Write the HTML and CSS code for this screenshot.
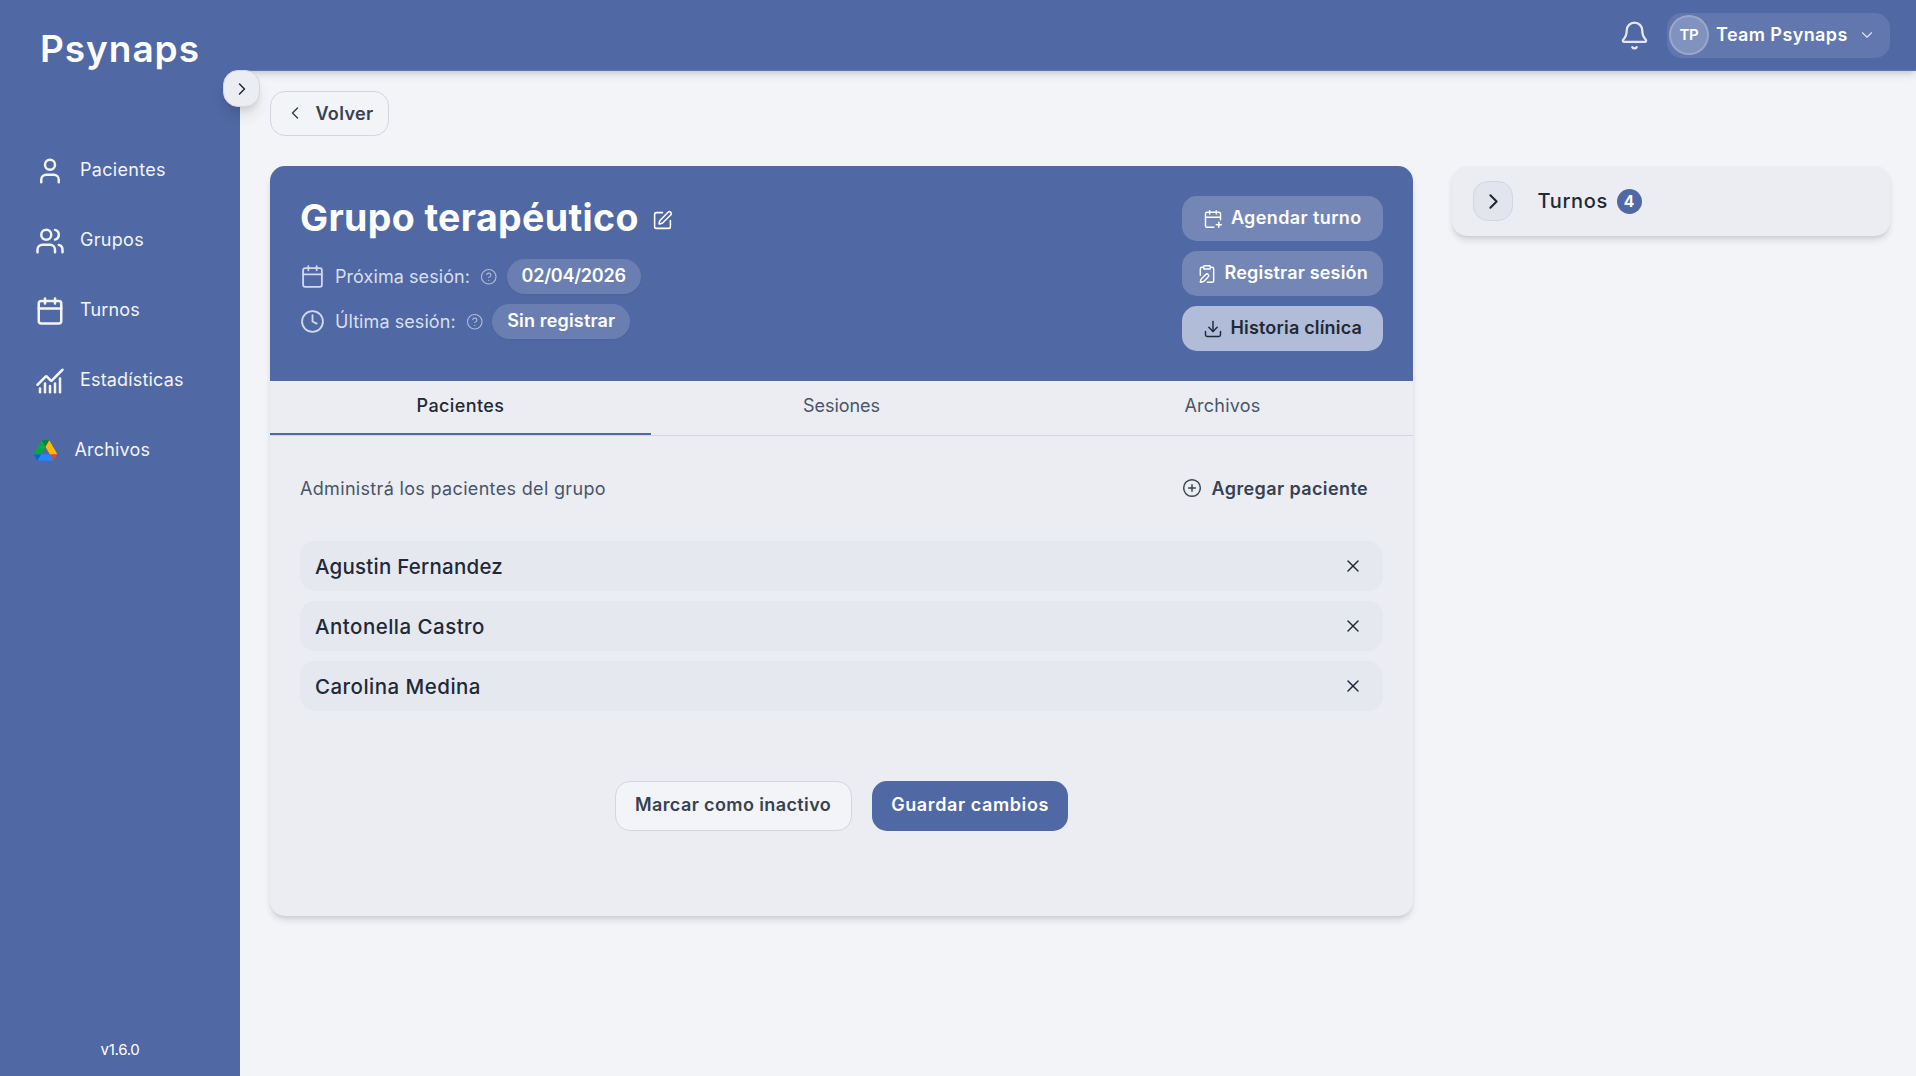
FILE: index.html
```
<!DOCTYPE html>
<html lang="es">
<head>
    <meta charset="UTF-8">
    <meta name="viewport" content="width=device-width, initial-scale=1.0">
    <title>Psynaps - Grupo terapéutico</title>
    <link rel="stylesheet" href="styles.css">
</head>
<body>
    <aside class="sidebar">
        <div class="logo">Psynaps</div>
        <nav class="nav">
            <a class="nav-item">
                <svg class="icon icon-nav" viewBox="0 0 24 24"><path d="M19 21v-2a4 4 0 0 0-4-4H9a4 4 0 0 0-4 4v2"/><circle cx="12" cy="7" r="4"/></svg>
                <span class="ls-wide">Pacientes</span>
            </a>
            <a class="nav-item">
                <svg class="icon icon-nav" viewBox="0 0 24 24"><path d="M16 21v-2a4 4 0 0 0-4-4H6a4 4 0 0 0-4 4v2"/><circle cx="9" cy="7" r="4"/><path d="M22 21v-2a4 4 0 0 0-3-3.87"/><path d="M16 3.13a4 4 0 0 1 0 7.75"/></svg>
                <span class="ls-wide">Grupos</span>
            </a>
            <a class="nav-item">
                <svg class="icon icon-nav" viewBox="0 0 24 24"><path d="M8 2v4"/><path d="M16 2v4"/><rect x="3" y="4" width="18" height="18" rx="2"/><path d="M3 10h18"/></svg>
                <span>Turnos</span>
            </a>
            <a class="nav-item">
                <svg class="icon icon-nav" viewBox="0 0 24 24"><path d="M12 16v5"/><path d="M16 14v7"/><path d="M20 10v11"/><path d="m22 3-8.646 8.646a.5.5 0 0 1-.708 0L9.354 8.354a.5.5 0 0 0-.707 0L2 15"/><path d="M4 18v3"/><path d="M8 14v7"/></svg>
                <span>Estadísticas</span>
            </a>
            <a class="nav-item nav-drive">
                <svg class="drive" viewBox="0 0 87.3 78">
                    <path fill="#0066da" d="m6.6 66.85 3.85 6.65c.8 1.4 1.95 2.5 3.3 3.3l13.75-23.8h-27.5c0 1.55.4 3.1 1.2 4.5z"/>
                    <path fill="#00ac47" d="m43.65 25-13.75-23.8c-1.35.8-2.5 1.9-3.3 3.3l-25.4 44a9.06 9.06 0 0 0 -1.2 4.5h27.5z"/>
                    <path fill="#ea4335" d="m73.55 76.8c1.35-.8 2.5-1.9 3.3-3.3l1.6-2.75 7.65-13.25c.8-1.4 1.2-2.95 1.2-4.5h-27.502l5.852 11.5z"/>
                    <path fill="#00832d" d="m43.65 25 13.75-23.8c-1.35-.8-2.9-1.2-4.5-1.2h-18.5c-1.6 0-3.15.45-4.5 1.2z"/>
                    <path fill="#2684fc" d="m59.8 53h-32.3l-13.75 23.8c1.35.8 2.9 1.2 4.5 1.2h50.8c1.6 0 3.15-.45 4.5-1.2z"/>
                    <path fill="#ffba00" d="m73.4 26.5-12.7-22c-.8-1.4-1.95-2.5-3.3-3.3l-13.75 23.8 16.15 28h27.45c0-1.55-.4-3.1-1.2-4.5z"/>
                </svg>
                <span>Archivos</span>
            </a>
        </nav>
        <div class="version">v1.6.0</div>
        <button class="sidebar-toggle">
            <svg class="icon" viewBox="0 0 24 24"><path d="m9 18 6-6-6-6"/></svg>
        </button>
    </aside>

    <div class="page">
        <header class="topbar">
            <svg class="icon bell" viewBox="0 0 24 24"><path d="M10.268 21a2 2 0 0 0 3.464 0"/><path d="M3.262 15.326A1 1 0 0 0 4 17h16a1 1 0 0 0 .74-1.673C19.41 13.956 18 12.499 18 8A6 6 0 0 0 6 8c0 4.499-1.411 5.956-2.738 7.326"/></svg>
            <button class="user">
                <span class="avatar">TP</span>
                <span class="user-name">Team Psynaps</span>
                <svg class="icon chevron" viewBox="0 0 24 24"><path d="m6 9 6 6 6-6"/></svg>
            </button>
        </header>

        <main class="content">
            <button class="btn btn-outline btn-back">
                <svg class="icon" viewBox="0 0 24 24"><path d="m15 18-6-6 6-6"/></svg>
                Volver
            </button>

            <div class="columns">
                <section class="card group">
                    <div class="group-header">
                        <div class="group-info">
                            <div class="title-row">
                                <h1>Grupo terapéutico</h1>
                                <svg class="icon icon-edit" viewBox="0 0 24 24"><path d="M12 3H5a2 2 0 0 0-2 2v14a2 2 0 0 0 2 2h14a2 2 0 0 0 2-2v-7"/><path d="M18.375 2.625a1 1 0 0 1 3 3l-9.013 9.014a2 2 0 0 1-.853.505l-2.873.84a.5.5 0 0 1-.62-.62l.84-2.873a2 2 0 0 1 .506-.852z"/></svg>
                            </div>
                            <div class="session">
                                <svg class="icon icon-session" viewBox="0 0 24 24"><path d="M8 2v4"/><path d="M16 2v4"/><rect x="3" y="4" width="18" height="18" rx="2"/><path d="M3 10h18"/></svg>
                                <span class="session-label">Próxima sesión:</span>
                                <svg class="icon icon-help" viewBox="0 0 24 24"><circle cx="12" cy="12" r="10"/><path d="M9.09 9a3 3 0 0 1 5.83 1c0 2-3 3-3 3"/><path d="M12 17h.01"/></svg>
                                <span class="pill pill-date">02/04/2026</span>
                            </div>
                            <div class="session">
                                <svg class="icon icon-session" viewBox="0 0 24 24"><circle cx="12" cy="12" r="10"/><path d="M12 6v6l4 2"/></svg>
                                <span class="session-label">Última sesión:</span>
                                <svg class="icon icon-help" viewBox="0 0 24 24"><circle cx="12" cy="12" r="10"/><path d="M9.09 9a3 3 0 0 1 5.83 1c0 2-3 3-3 3"/><path d="M12 17h.01"/></svg>
                                <span class="pill">Sin registrar</span>
                            </div>
                        </div>
                        <div class="actions">
                            <button class="btn btn-ghost">
                                <svg class="icon" viewBox="0 0 24 24"><path d="M8 2v4"/><path d="M16 2v4"/><path d="M21 13V6a2 2 0 0 0-2-2H5a2 2 0 0 0-2 2v14a2 2 0 0 0 2 2h8"/><path d="M3 10h18"/><path d="M16 19h6"/><path d="M19 16v6"/></svg>
                                <span>Agendar turno</span>
                            </button>
                            <button class="btn btn-ghost btn-register">
                                <svg class="icon" viewBox="0 0 24 24"><rect width="8" height="4" x="8" y="2" rx="1"/><path d="M16 4h2a2 2 0 0 1 2 2v14a2 2 0 0 1-2 2h-5.5"/><path d="M4 13.5V6a2 2 0 0 1 2-2h2"/><path d="M13.378 15.626a1 1 0 1 0-3.004-3.004l-5.01 5.012a2 2 0 0 0-.506.854l-.837 2.87a.5.5 0 0 0 .62.62l2.87-.837a2 2 0 0 0 .854-.506z"/></svg>
                                <span>Registrar sesión</span>
                            </button>
                            <button class="btn btn-light">
                                <svg class="icon" viewBox="0 0 24 24"><path d="M21 15v4a2 2 0 0 1-2 2H5a2 2 0 0 1-2-2v-4"/><path d="m7 10 5 5 5-5"/><path d="M12 15V3"/></svg>
                                <span>Historia clínica</span>
                            </button>
                        </div>
                    </div>

                    <div class="tabs">
                        <button class="tab active">Pacientes</button>
                        <button class="tab tab-sessions">Sesiones</button>
                        <button class="tab">Archivos</button>
                    </div>

                    <div class="group-body">
                        <div class="body-top">
                            <p>Administrá los pacientes del grupo</p>
                            <button class="btn btn-add">
                                <svg class="icon" viewBox="0 0 24 24"><circle cx="12" cy="12" r="10"/><path d="M8 12h8"/><path d="M12 8v8"/></svg>
                                Agregar paciente
                            </button>
                        </div>
                        <ul class="patients">
                            <li>
                                <span class="name-long">Agustin Fernandez</span>
                                <svg class="icon" viewBox="0 0 24 24"><path d="M18 6 6 18"/><path d="m6 6 12 12"/></svg>
                            </li>
                            <li>
                                <span>Antonella Castro</span>
                                <svg class="icon" viewBox="0 0 24 24"><path d="M18 6 6 18"/><path d="m6 6 12 12"/></svg>
                            </li>
                            <li>
                                <span>Carolina Medina</span>
                                <svg class="icon" viewBox="0 0 24 24"><path d="M18 6 6 18"/><path d="m6 6 12 12"/></svg>
                            </li>
                        </ul>
                        <div class="form-actions">
                            <button class="btn btn-outline">Marcar como inactivo</button>
                            <button class="btn btn-primary">Guardar cambios</button>
                        </div>
                    </div>
                </section>

                <section class="card appointments">
                    <button class="expand">
                        <svg class="icon" viewBox="0 0 24 24"><path d="m9 18 6-6-6-6"/></svg>
                    </button>
                    <h2>Turnos</h2>
                    <span class="count">4</span>
                </section>
            </div>
        </main>
    </div>
</body>
</html>
```
FILE: styles.css
```
:root {
    --primary: #5068a4;
    --bg: #f3f4f8;
    --card: #ecedf2;
    --row: #e5e8ef;
    --border: #d3d5e0;
    --text: #1f2937;
    --text-soft: #374151;
    --muted: #475569;
    --shadow: 0 5px 7px -1px rgba(0, 0, 0, 0.12), 0 2px 4px -2px rgba(0, 0, 0, 0.12);
}

*,
*::before,
*::after {
    box-sizing: border-box;
    margin: 0;
    padding: 0;
}

body {
    display: flex;
    height: 100vh;
    overflow: hidden;
    background: var(--bg);
    color: var(--text);
    font-family: "Inter", "Noto Sans", sans-serif;
    font-size: 18px;
    line-height: 25px;
    letter-spacing: 0.17px;
}

button {
    border: none;
    background: none;
    color: inherit;
    font: inherit;
    letter-spacing: inherit;
    cursor: pointer;
}

.icon {
    width: 20px;
    height: 20px;
    flex-shrink: 0;
    fill: none;
    stroke: currentColor;
    stroke-width: 1.75;
    stroke-linecap: round;
    stroke-linejoin: round;
}

/* Sidebar */
.sidebar {
    position: relative;
    z-index: 2;
    display: flex;
    flex-direction: column;
    flex-shrink: 0;
    width: 240px;
    background: var(--primary);
    color: var(--bg);
}

.logo {
    padding: 26px 0 0 40px;
    color: #fff;
    font-size: 37px;
    font-weight: 600;
    line-height: 45px;
    letter-spacing: 0.95px;
}

.nav {
    display: flex;
    flex-direction: column;
    gap: 20px;
    margin-top: 75px;
    padding-left: 35px;
}

.nav-item {
    display: flex;
    align-items: center;
    gap: 15px;
    height: 50px;
}

.nav-item span {
    padding-bottom: 3px;
}

.ls-wide {
    letter-spacing: 0.3px;
}

.icon-nav {
    width: 30px;
    height: 30px;
    stroke-width: 2;
}

.nav-drive {
    gap: 17.5px;
    margin-left: -1px;
    padding-bottom: 2px;
}

.nav-drive span {
    padding-bottom: 1px;
}

.drive {
    width: 23px;
    height: 21px;
}

.version {
    margin-top: auto;
    padding-bottom: 14px;
    color: #fff;
    font-size: 15px;
    letter-spacing: -0.3px;
    text-align: center;
}

.sidebar-toggle {
    position: absolute;
    top: 70px;
    right: -20px;
    display: flex;
    align-items: center;
    justify-content: center;
    width: 37px;
    height: 37px;
    border: 1px solid var(--border);
    border-radius: 15px;
    background: var(--card);
    color: var(--text);
    box-shadow: 0 10px 15px -3px rgba(0, 0, 0, 0.12), 0 4px 6px -2px rgba(0, 0, 0, 0.08);
}

/* Topbar */
.page {
    display: flex;
    flex: 1;
    flex-direction: column;
}

.topbar {
    display: flex;
    align-items: center;
    justify-content: flex-end;
    gap: 17.5px;
    height: 71px;
    padding-right: 26px;
    border-bottom: 1px solid #6277ad;
    background: var(--primary);
    box-shadow: var(--shadow);
    color: #fff;
}

.bell {
    width: 31px;
    height: 31px;
    stroke-width: 1.75;
    opacity: 0.85;
}

.user {
    display: flex;
    align-items: center;
    width: 223px;
    height: 45px;
    padding-left: 2px;
    border-radius: 15px;
    background: rgba(255, 255, 255, 0.1);
}

.avatar {
    width: 40px;
    height: 40px;
    border: 2px solid rgba(255, 255, 255, 0.2);
    border-radius: 50%;
    background: rgba(255, 255, 255, 0.2);
    font-size: 15px;
    font-weight: 600;
    line-height: 35px;
    letter-spacing: -0.3px;
    text-align: center;
}

.user-name {
    margin-left: 7px;
    padding-bottom: 1px;
    font-weight: 600;
    letter-spacing: 0.4px;
}

.chevron {
    width: 18px;
    height: 18px;
    margin-left: 10px;
    stroke-width: 1.5;
    opacity: 0.8;
}

/* Content */
.content {
    flex: 1;
    padding: 20px 26px 0 30px;
}

.btn {
    display: flex;
    align-items: center;
    justify-content: center;
    height: 45px;
    border-radius: 15px;
    font-weight: 600;
    letter-spacing: 0.39px;
}

.btn-outline {
    border: 1px solid var(--border);
    background: var(--bg);
    color: var(--text-soft);
}

.btn-back {
    gap: 10px;
    width: 119px;
    padding-bottom: 1px;
}

.columns {
    display: grid;
    grid-template-columns: 1143px 438px;
    gap: 39px;
    align-items: start;
    margin-top: 30px;
}

.card {
    border-radius: 15px;
    background: var(--card);
    box-shadow: var(--shadow);
}

.group {
    overflow: hidden;
    height: 750px;
}

.group-header {
    display: flex;
    justify-content: space-between;
    height: 215px;
    padding: 30px;
    background: var(--primary);
    color: #fff;
}

.title-row {
    display: flex;
    align-items: center;
    gap: 13px;
    height: 45px;
    margin-bottom: 18px;
}

h1 {
    padding-bottom: 2px;
    font-size: 37.5px;
    font-weight: 700;
    line-height: 45px;
    letter-spacing: 0.35px;
}

.icon-edit {
    width: 21px;
    height: 21px;
    margin-top: 4px;
}

.session {
    display: flex;
    align-items: center;
    gap: 10px;
    height: 35px;
    margin-bottom: 10px;
}

.icon-session {
    width: 25px;
    height: 25px;
    stroke-width: 1.75;
    opacity: 0.75;
}

.session-label {
    padding-bottom: 1px;
    color: #d9dfec;
    letter-spacing: 0.07px;
}

.icon-help {
    width: 17.5px;
    height: 17.5px;
    stroke-width: 1.5;
    opacity: 0.55;
}

.pill {
    height: 35px;
    margin-left: -1px;
    padding: 0 15px;
    border-radius: 18px;
    background: rgba(255, 255, 255, 0.15);
    box-shadow: 0 1px 2px rgba(0, 0, 0, 0.05);
    font-weight: 600;
    line-height: 34px;
}

.pill-date {
    letter-spacing: -0.22px;
}

.actions {
    display: flex;
    flex-direction: column;
    gap: 10px;
    width: 201px;
}

.actions .btn {
    gap: 7.5px;
}

.actions .btn span {
    padding-bottom: 2px;
}

.btn-ghost {
    background: rgba(255, 255, 255, 0.2);
}

.actions .btn-register,
.actions .btn-light {
    letter-spacing: 0.18px;
}

.btn-light {
    background: #b1bcd8;
    color: var(--text);
}

/* Tabs */
.tabs {
    display: grid;
    grid-template-columns: repeat(3, 1fr);
    height: 55px;
    border-bottom: 1px solid var(--border);
}

.tab {
    padding-bottom: 3px;
    border-bottom: 2px solid transparent;
    color: var(--muted);
    letter-spacing: 0.22px;
}

.tab-sessions {
    letter-spacing: -0.05px;
}

.tab.active {
    border-bottom-color: var(--primary);
    color: var(--text);
    font-weight: 500;
    letter-spacing: 0.4px;
}

.group-body {
    padding: 30px;
}

.body-top {
    display: flex;
    align-items: center;
    justify-content: space-between;
    height: 45px;
    margin-bottom: 30px;
    padding-bottom: 1px;
}

.body-top p {
    color: var(--muted);
    letter-spacing: 0.33px;
}

.btn-add {
    gap: 10px;
    padding-right: 15px;
    color: var(--text-soft);
}

/* Patients */
.patients {
    display: flex;
    flex-direction: column;
    gap: 10px;
    list-style: none;
}

.patients li {
    display: flex;
    align-items: center;
    justify-content: space-between;
    height: 50px;
    padding: 0 20px 0 15px;
    border-radius: 15px;
    background: var(--row);
    font-size: 20.5px;
    font-weight: 500;
    letter-spacing: 0.47px;
}

.patients .name-long {
    letter-spacing: 0.23px;
}

.form-actions {
    display: flex;
    justify-content: center;
    gap: 20px;
    margin-top: 70px;
}

.form-actions .btn {
    height: 50px;
    padding: 0 19.5px 3px;
}

.btn-primary {
    background: var(--primary);
    color: #fff;
}

.form-actions .btn-primary {
    letter-spacing: 0.6px;
}

/* Appointments */
.appointments {
    display: flex;
    align-items: center;
    height: 70px;
    padding-left: 21px;
}

.expand {
    display: flex;
    align-items: center;
    justify-content: center;
    width: 40px;
    height: 40px;
    border: 1px solid var(--border);
    border-radius: 15px;
    background: #e2e5ed;
}

.expand .icon {
    width: 25px;
    height: 25px;
    stroke-width: 2;
}

h2 {
    margin: 0 8.5px 0 24.5px;
    font-size: 20px;
    font-weight: 500;
    letter-spacing: 0.67px;
}

.count {
    width: 25px;
    height: 25px;
    border-radius: 50%;
    background: var(--primary);
    color: #fff;
    font-size: 15.5px;
    font-weight: 700;
    letter-spacing: 0;
    text-align: center;
}
```
